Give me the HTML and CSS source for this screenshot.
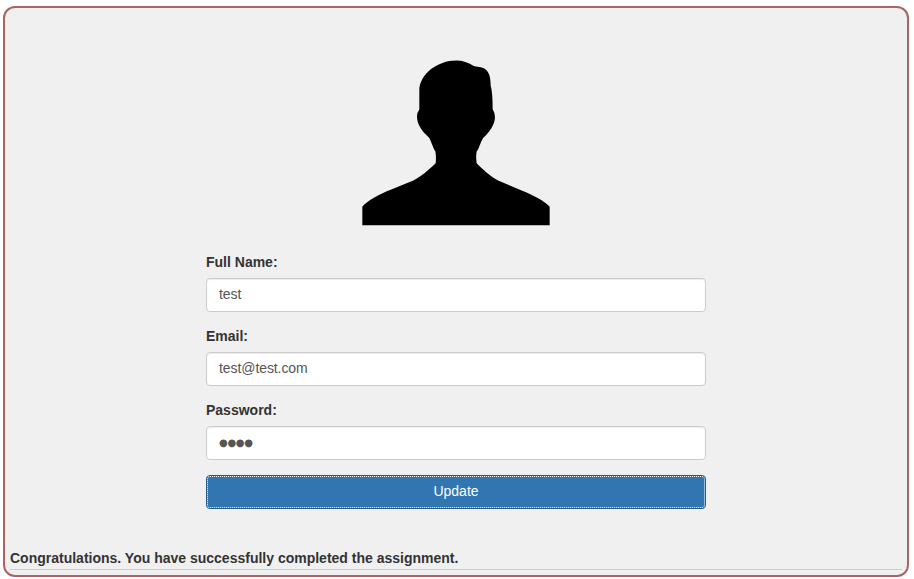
FILE: index.html
```html
<!DOCTYPE html>
<html lang="en">
<head>
<meta charset="utf-8">
<title>Profile</title>
<link rel="stylesheet" href="styles.css">
</head>
<body>
<main class="panel">
  <svg class="avatar" viewBox="0 -1.5 630 555" role="img" aria-label="Profile picture">
    <path d="M37 524V469C50 452 92 429 122 418L190 390C215 377 239 355 257 338Q259 318 256 302C249 294 243 268 236 260C215 242 201 220 201 198Q201 186 208 177V120C208 71 263 30 318 30C339 30 354 36 370 46C380 51 395 48 406 56C419 65 422 85 422 106Q428 126 428 176Q435 187 435 200C434 222 420 243 400 262C391 274 388 295 380 303Q377 318 380 338C397 355 420 377 446 391L515 420C550 434 584 451 599 469V524Z"/>
  </svg>
  <form class="profile-form">
    <div class="form-group">
      <label for="name">Full Name:</label>
      <input class="form-control" id="name" type="text" value="test">
    </div>
    <div class="form-group">
      <label for="email">Email:</label>
      <input class="form-control" id="email" type="text" value="test@test.com">
    </div>
    <div class="form-group">
      <label for="password">Password:</label>
      <div class="form-control password" id="password">●●●●</div>
    </div>
    <button class="update" type="button">Update</button>
  </form>
  <p class="message">Congratulations. You have successfully completed the assignment.</p>
</main>
</body>
</html>
```
FILE: styles.css
```css
* {
  box-sizing: border-box;
}

body {
  margin: 0;
  padding: 6px 5px 2px 3px;
  background: #fff;
  color: #333;
  font: 14px/20px "Liberation Sans", Arial, sans-serif;
}

.panel {
  display: flex;
  flex-direction: column;
  align-items: center;
  height: 571px;
  padding: 42px 5px 0;
  border: 2px solid #a96464;
  border-radius: 12px;
  background: #f0f0f0;
}

.avatar {
  display: block;
  flex: none;
  width: 210px;
  height: 185px;
  margin-right: 2px;
}

.profile-form {
  width: 500px;
  margin-top: 17px;
}

.form-group {
  margin-bottom: 14px;
}

.form-group:last-of-type {
  margin-bottom: 15px;
}

label {
  display: block;
  margin-bottom: 6px;
  font-weight: bold;
}

.form-control {
  display: block;
  width: 100%;
  height: 34px;
  padding: 4px 12px 6px;
  border: 1px solid #ccc;
  border-radius: 4px;
  background: #fff;
  box-shadow: inset 0 1px 1px rgba(0, 0, 0, 0.075);
  color: #555;
  font: inherit;
  letter-spacing: -0.08px;
}

.password {
  padding-top: 6px;
  font-family: "DejaVu Sans", sans-serif;
  font-size: 10px;
  letter-spacing: -0.3px;
}

.update {
  display: block;
  width: 100%;
  height: 34px;
  padding: 4px 12px 6px;
  border: 1px solid #265a88;
  border-radius: 4px;
  outline: 1px dotted #fff;
  outline-offset: -2px;
  background: #3176b1;
  color: #fff;
  font: inherit;
}

.message {
  width: 100%;
  margin: 39px 0 0;
  border-bottom: 1px solid #ccc;
  font-weight: bold;
  line-height: 21px;
}
```
